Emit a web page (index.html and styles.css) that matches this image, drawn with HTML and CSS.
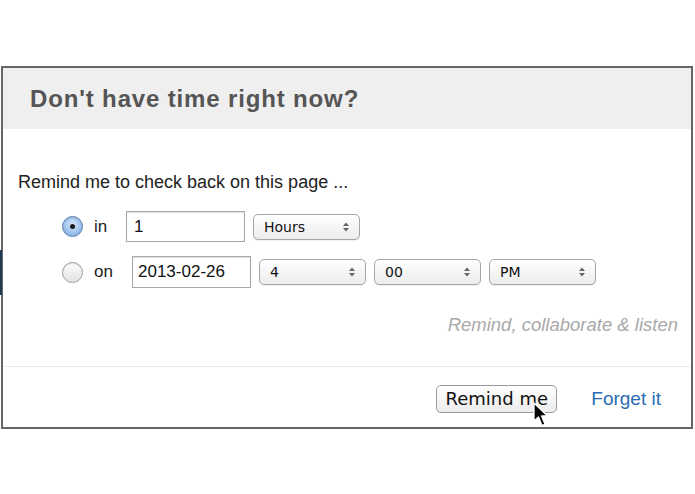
FILE: index.html
```html
<!DOCTYPE html>
<html>
<head>
<meta charset="utf-8">
<link rel="stylesheet" href="styles.css">
</head>
<body>
<div class="page">
  <div class="edge"></div>
  <div class="dialog">
    <div class="header"><h1 class="title">Don't have time right now?</h1></div>
    <div class="content">
      <p class="prompt">Remind me to check back on this page ...</p>
      <div class="row row-in">
        <span class="radio checked"><span class="dot"></span></span>
        <span class="label">in</span>
        <div class="input input-in">1</div>
        <div class="select">Hours<span class="arrows"><svg width="6" height="10" viewBox="0 0 6 10"><path d="M0 4 L3 0.5 L6 4 Z M0 6 L3 9.5 L6 6 Z" fill="#666"/></svg></span></div>
      </div>
      <div class="row row-on">
        <span class="radio"></span>
        <span class="label">on</span>
        <div class="input input-on">2013-02-26</div>
        <div class="select">4<span class="arrows"><svg width="6" height="10" viewBox="0 0 6 10"><path d="M0 4 L3 0.5 L6 4 Z M0 6 L3 9.5 L6 6 Z" fill="#666"/></svg></span></div>
        <div class="select">00<span class="arrows"><svg width="6" height="10" viewBox="0 0 6 10"><path d="M0 4 L3 0.5 L6 4 Z M0 6 L3 9.5 L6 6 Z" fill="#666"/></svg></span></div>
        <div class="select">PM<span class="arrows"><svg width="6" height="10" viewBox="0 0 6 10"><path d="M0 4 L3 0.5 L6 4 Z M0 6 L3 9.5 L6 6 Z" fill="#666"/></svg></span></div>
      </div>
      <p class="tagline">Remind, collaborate &amp; listen</p>
    </div>
    <div class="footer">
      <div class="btn-wrap">
        <button class="button">Remind me</button>
        <svg class="cursor" width="16" height="26" viewBox="0 0 16 26"><path d="M1 1 L1 19 L5.5 15 L9 23.5 L12 22.2 L8.6 14 L14.5 14 Z" fill="#000" stroke="#fff" stroke-width="1.3" stroke-linejoin="round"/></svg>
      </div>
      <a class="link" href="#">Forget it</a>
    </div>
  </div>
</div>
</body>
</html>
```

FILE: styles.css
```css
html, body {
  margin: 0;
  padding: 0;
  background: #ffffff;
}
body {
  font-family: "Liberation Sans", Arial, sans-serif;
  color: #222;
}
.page {
  position: relative;
  width: 695px;
  height: 494px;
  padding-top: 66px;
  box-sizing: border-box;
}
.edge {
  position: absolute;
  left: 0;
  top: 250px;
  width: 2px;
  height: 45px;
  background: #1d3a52;
}
.dialog {
  margin-left: 1px;
  width: 692px;
  height: 363px;
  box-sizing: border-box;
  border: 2px solid #666;
  background: #fff;
  display: flex;
  flex-direction: column;
}
.header {
  height: 61px;
  background: #efefef;
  display: flex;
  align-items: center;
  padding-left: 27px;
}
.title {
  margin: 0;
  font-size: 24px;
  font-weight: bold;
  color: #555;
  letter-spacing: 0.85px;
}
.content {
  flex: 1;
  border-bottom: 1px solid #ebebeb;
}
.prompt {
  margin: 43px 0 0 15px;
  font-size: 18px;
  line-height: 20px;
  color: #222;
}
.row {
  display: flex;
  align-items: center;
  padding-left: 59px;
}
.row-in {
  margin-top: 19px;
}
.row-on {
  margin-top: 14px;
}
.radio {
  width: 19px;
  height: 19px;
  border-radius: 50%;
  border: 1px solid #999;
  background: linear-gradient(#fdfdfd, #e2e2e2);
  box-shadow: inset 0 1px 1px rgba(0,0,0,0.1);
  display: flex;
  align-items: center;
  justify-content: center;
  flex: none;
}
.radio.checked {
  border-color: #5b7fae;
  background: radial-gradient(circle at 50% 40%, #d7e8fb 0%, #9fc4ee 55%, #6e9ed8 100%);
}
.dot {
  width: 5px;
  height: 5px;
  border-radius: 50%;
  background: #1a1a1a;
}
.label {
  font-size: 17px;
  margin-left: 11px;
  color: #222;
}
.row-in .label {
  width: 32px;
}
.row-on .label {
  width: 38px;
}
.input {
  height: 31px;
  box-sizing: border-box;
  border: 1px solid #a8a8a8;
  box-shadow: inset 0 1px 1px rgba(0,0,0,0.12);
  font-size: 17px;
  line-height: 29px;
  padding-left: 7px;
  color: #111;
  background: #fff;
}
.input-in {
  width: 119px;
}
.input-on {
  width: 119px;
  height: 32px;
  line-height: 30px;
  padding-left: 5px;
}
.select {
  margin-left: 8px;
  width: 107px;
  height: 26px;
  box-sizing: border-box;
  border: 1px solid #a6a6a6;
  border-radius: 5px;
  background: linear-gradient(#ffffff, #ececec);
  box-shadow: 0 1px 0 rgba(0,0,0,0.06);
  font-family: "DejaVu Sans", sans-serif;
  font-size: 14px;
  line-height: 24px;
  padding-left: 10px;
  color: #111;
  position: relative;
}
.arrows {
  position: absolute;
  right: 10px;
  top: 7px;
  display: flex;
}
.tagline {
  margin: 27px 13px 0 0;
  text-align: right;
  font-size: 18.5px;
  line-height: 20px;
  font-style: italic;
  color: #a9a9a9;
}
.footer {
  height: 60px;
  display: flex;
  align-items: center;
  justify-content: flex-end;
  padding-right: 30px;
  padding-top: 3px;
  box-sizing: border-box;
}
.btn-wrap {
  position: relative;
}
.button {
  display: block;
  width: 121px;
  height: 28px;
  border: 1px solid #9a9a9a;
  border-radius: 5px;
  background: linear-gradient(#ffffff, #ececec);
  font-family: "DejaVu Sans", sans-serif;
  font-size: 18px;
  color: #111;
  padding: 0;
}
.cursor {
  position: absolute;
  left: 97px;
  top: 17px;
}
.link {
  margin-left: 34px;
  font-size: 19px;
  color: #2a6db3;
  text-decoration: none;
}
```
